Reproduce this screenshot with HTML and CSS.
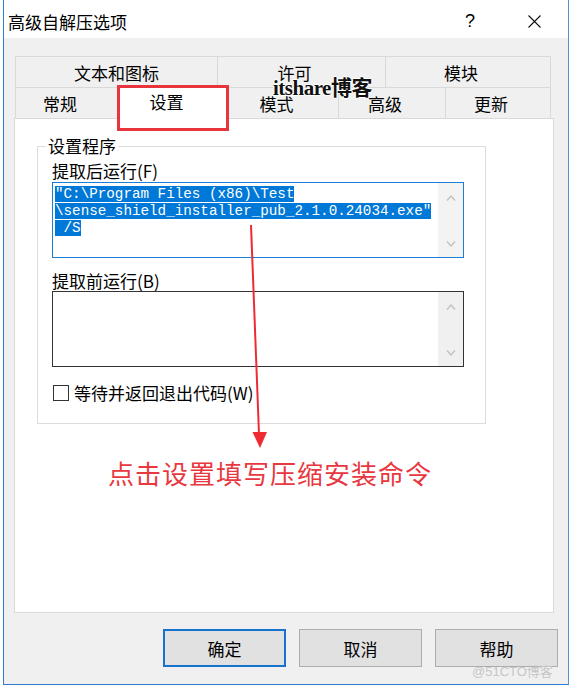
FILE: index.html
```html
<!DOCTYPE html>
<html lang="zh-CN">
<head>
  <meta charset="UTF-8">
  <meta name="viewport" content="width=device-width, initial-scale=1.0">
  <title>高级自解压选项</title>
  <link rel="stylesheet" href="styles.css">
</head>
<body>

  <div class="window">
    <div class="titlebar">
      <span class="title">高级自解压选项</span>
      <span class="tb-btn help">?</span>
      <span class="tb-btn close">
        <svg width="13" height="13" viewBox="0 0 13 13"><path d="M0.5 0.5 L12.5 12.5 M12.5 0.5 L0.5 12.5" stroke="#111" stroke-width="1.1" fill="none"/></svg>
      </span>
    </div>

    <div class="client">
      <div class="tabs">
        <div class="tab-row top-row">
          <div class="tab">文本和图标</div>
          <div class="tab">许可</div>
          <div class="tab last">模块</div>
        </div>
        <div class="tab-row bottom-row">
          <div class="tab">常规</div>
          <div class="tab active">设置</div>
          <div class="tab">模式</div>
          <div class="tab">高级</div>
          <div class="tab last">更新</div>
        </div>
      </div>

      <div class="panel">
        <fieldset class="group">
          <legend>设置程序</legend>

          <label class="field-label">提取后运行(F)</label>
          <div class="textbox focused">
            <div class="textbox-text">
              <div class="line"><span class="sel">"C:\Program Files (x86)\Test</span></div>
              <div class="line"><span class="sel">\sense_shield_installer_pub_2.1.0.24034.exe"</span></div>
              <div class="line"><span class="sel"> /S</span></div>
            </div>
            <div class="scrollbar">
              <div class="arrow up"><svg width="10" height="6" viewBox="0 0 10 6"><path d="M1 5.5 L5 1 L9 5.5" stroke="#c2c2c2" stroke-width="1.4" fill="none"/></svg></div>
              <div class="arrow down"><svg width="10" height="6" viewBox="0 0 10 6"><path d="M1 0.5 L5 5 L9 0.5" stroke="#c2c2c2" stroke-width="1.4" fill="none"/></svg></div>
            </div>
          </div>

          <label class="field-label second">提取前运行(B)</label>
          <div class="textbox">
            <div class="textbox-text"></div>
            <div class="scrollbar">
              <div class="arrow up"><svg width="10" height="6" viewBox="0 0 10 6"><path d="M1 5.5 L5 1 L9 5.5" stroke="#c2c2c2" stroke-width="1.4" fill="none"/></svg></div>
              <div class="arrow down"><svg width="10" height="6" viewBox="0 0 10 6"><path d="M1 0.5 L5 5 L9 0.5" stroke="#c2c2c2" stroke-width="1.4" fill="none"/></svg></div>
            </div>
          </div>

          <div class="check-row">
            <span class="checkbox"></span>
            <span>等待并返回退出代码(W)</span>
          </div>
        </fieldset>

        <p class="caption">点击设置填写压缩安装命令</p>
      </div>

      <div class="buttons">
        <button class="btn default">确定</button>
        <button class="btn">取消</button>
        <button class="btn">帮助</button>
      </div>
    </div>

    <!-- annotations drawn over the screenshot -->
    <div class="mark-box"></div>
    <svg class="mark-arrow" width="570" height="686" viewBox="0 0 570 686">
      <path d="M251 225 L259 434" stroke="#ee2b33" stroke-width="2" fill="none"/>
      <polygon points="252.5,432 267,432 260,448" fill="#ee2b33"/>
    </svg>
    <div class="stamp">itshare博客</div>
    <div class="watermark">@51CTO博客</div>
  </div>

</body>
</html>
```

FILE: styles.css
```css
body {
  margin: 0;
  background: #fff;
  font-family: "Noto Sans CJK SC", "Liberation Sans", sans-serif;
  color: #000;
}
.window {
  position: relative;
  box-sizing: border-box;
  margin-left: 3px;
  width: 566px;
  height: 685px;
  border-left: 1px solid #2d7bd2;
  border-right: 1px solid #5b8fcf;
  border-bottom: 1px solid #2d7bd2;
  background: #f0f0f0;
}
.titlebar {
  display: flex;
  align-items: center;
  height: 38px;
  padding-right: 2px;
  background: #fff;
}
.title {
  padding-left: 4px;
  font-size: 17px;
  margin-top: 4px;
}
.tb-btn {
  display: flex;
  justify-content: center;
  align-items: center;
  width: 64px;
  height: 38px;
  margin-top: 4px;
}
.help {
  margin-left: auto;
  font-family: "Liberation Sans", sans-serif;
  font-size: 18px;
}
.client {
  padding: 18px 0 0 10px;
}

/* tabs */
.tabs {
  margin-left: 1px;
  width: 536px;
}
.tab-row {
  display: grid;
  grid-template-rows: 31px;
}
.top-row {
  grid-template-columns: 202px 168px 166px;
}
.bottom-row {
  grid-template-columns: 103px 110px 110px 107px 106px;
}
.tab {
  box-sizing: border-box;
  display: flex;
  justify-content: center;
  align-items: center;
  height: 31px;
  padding: 1px 14px 0 0;
  border-top: 1px solid #d9d9d9;
  border-left: 1px solid #d9d9d9;
  font-size: 17px;
}
.tab.last {
  border-right: 1px solid #d9d9d9;
}
.top-row .tab:first-child {
  padding-right: 0;
}
.tab.active {
  position: relative;
  z-index: 1;
  top: -2px;
  height: 34px;
  padding-bottom: 4px;
  background: #fff;
}

/* page */
.panel {
  box-sizing: border-box;
  width: 540px;
  height: 495px;
  background: #fff;
  border: 1px solid #d9d9d9;
}
.group {
  box-sizing: border-box;
  width: 449px;
  margin: 17px 0 0 22px;
  padding: 5px 21px 20px 14px;
  border: 1px solid #dcdcdc;
}
.group legend {
  margin-left: -6px;
  padding: 0 2px;
  font-size: 17px;
  line-height: 20px;
}
.field-label {
  display: block;
  font-size: 17px;
  line-height: 20px;
  margin-bottom: 1px;
}
.field-label.second {
  margin-top: 13px;
  margin-bottom: 0;
}
.textbox {
  box-sizing: border-box;
  display: flex;
  height: 76px;
  border: 1px solid #333;
}
.textbox.focused {
  border-color: #1a7fd4;
}
.textbox-text {
  flex: 1;
  padding: 3px 0 0 2px;
  font-family: "Liberation Mono", monospace;
  font-size: 14.25px;
  line-height: 17px;
}
.line {
  white-space: pre;
}
.sel {
  background: #0078d7;
  color: #fff;
}
.scrollbar {
  display: flex;
  flex-direction: column;
  justify-content: space-between;
  width: 25px;
  background: #f0f0f0;
}
.focused .scrollbar {
  background: #f3f3f3;
}
.arrow {
  display: flex;
  justify-content: center;
  align-items: center;
}
.arrow.up {
  height: 30px;
}
.arrow.down {
  height: 26px;
}
.check-row {
  display: flex;
  align-items: center;
  gap: 5px;
  margin: 16px 0 0 1px;
  font-size: 17px;
  line-height: 20px;
}
.checkbox {
  box-sizing: border-box;
  width: 16px;
  height: 16px;
  border: 1px solid #333;
  background: #fff;
}
.caption {
  margin: 34px 0 0 93px;
  font-size: 26px;
  line-height: 30px;
  letter-spacing: 1px;
  color: #e8383f;
}

/* dialog buttons */
.buttons {
  display: flex;
  justify-content: flex-end;
  gap: 13px;
  margin-top: 16px;
  padding-right: 10px;
}
.btn {
  box-sizing: border-box;
  width: 123px;
  height: 38px;
  padding: 0;
  background: #e1e1e1;
  border: 1px solid #adadad;
  font-family: "Noto Sans CJK SC", sans-serif;
  font-size: 17px;
  color: #000;
}
.btn.default {
  border: 2px solid #1672cc;
}

/* annotations */
.mark-box {
  position: absolute;
  left: 113px;
  top: 85px;
  box-sizing: border-box;
  width: 112px;
  height: 46px;
  border: 3px solid #e8343c;
  z-index: 2;
}
.mark-arrow {
  position: absolute;
  left: -4px;
  top: 0;
  z-index: 2;
  pointer-events: none;
}
.stamp {
  position: absolute;
  left: 269px;
  top: 77px;
  z-index: 3;
  font-family: "Liberation Serif", "Noto Sans CJK SC", serif;
  font-weight: bold;
  font-size: 21px;
  line-height: 22px;
  letter-spacing: -0.5px;
  color: #111;
  text-shadow: 1px 0 0 #fff, -1px 0 0 #fff, 0 1px 0 #fff, 0 -1px 0 #fff;
}
.watermark {
  position: absolute;
  left: 468px;
  top: 661px;
  z-index: 3;
  font-family: "Liberation Sans", "Noto Sans CJK SC", sans-serif;
  font-size: 13px;
  color: #c6c6c6;
}
```
